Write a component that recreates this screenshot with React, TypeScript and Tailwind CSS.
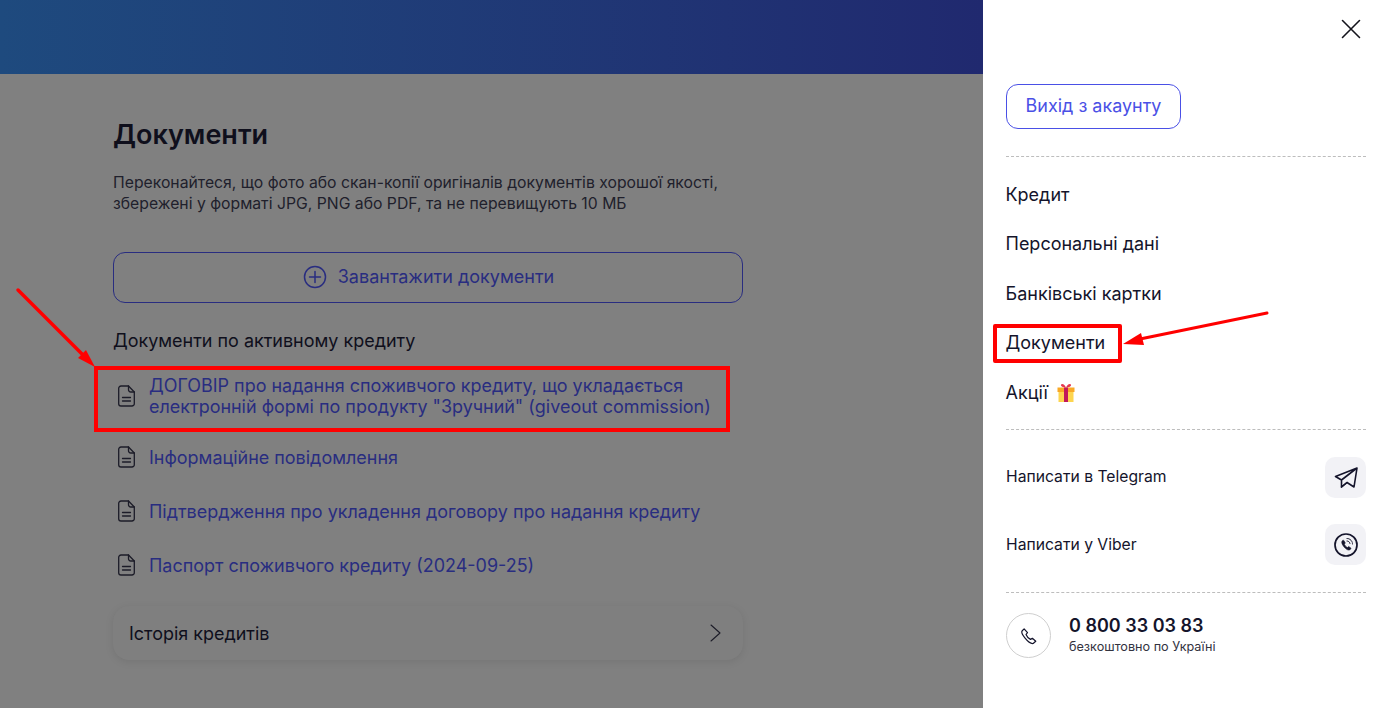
import React from "react";

const DocIcon = () => (
  <svg width="17" height="22" viewBox="0 0 17 22" fill="none" stroke="#1c1c28" strokeWidth="1.3" strokeLinejoin="round" strokeLinecap="round" className="shrink-0">
    <path d="M10.500 1H3a2.300 2.300 0 0 0-2.300 2.300v15.400A2.300 2.300 0 0 0 3 21h11a2.300 2.300 0 0 0 2.300-2.300V7z" />
    <path d="M10.500 1v3.500A2.300 2.300 0 0 0 12.800 7h3.500" />
    <path d="M4.500 12.500h8M4.500 16h8" />
  </svg>
);

const Doc = ({ children, className }: { children: React.ReactNode; className: string }) => (
  <a className={`flex items-center gap-[14px] pl-[5px] text-[17.97px] leading-[21px] text-[#292d80] ${className}`}>
    <DocIcon />
    <span>{children}</span>
  </a>
);

const Dash = () => <div className="border-t border-dashed border-[#bdbdbd]" />;

const MenuItem = ({ children }: { children: React.ReactNode }) => (
  <div className="-ml-[0.5px] flex h-[49.5px] items-center gap-[9px] text-[18px] text-[#14142b]">{children}</div>
);

const Contact = ({ label, labelClass, children }: { label: string; labelClass: string; children: React.ReactNode }) => (
  <div className="flex items-center justify-between">
    <span className={`text-[15.7px] text-[#14142b] ${labelClass}`}>{label}</span>
    <span className="flex h-[41px] w-[41px] items-center justify-center rounded-[10px] bg-[#f2f2f6]">{children}</span>
  </div>
);

export default function App() {
  return (
    <div className="relative flex h-[708px] w-[1386px] overflow-hidden bg-[#808080] font-['Inter',sans-serif]">
      <main className="w-[983px] shrink-0">
        <div className="h-[74px] bg-gradient-to-r from-[#1e4a7e] to-[#20296f]" />
        <div className="w-[630px] ml-[113px] pt-[43px]">
          <h1 className="text-[27px] font-semibold leading-[36px] text-[#0f0f1c]">Документи</h1>
          <p className="mt-[19px] text-[15.75px] leading-[21px] text-[#20202c]">
            Переконайтеся, що фото або скан-копії оригіналів документів хорошої якості,
            <br />
            збережені у форматі JPG, PNG або PDF, та не перевищують 10 МБ
          </p>
          <button className="mt-[38px] flex h-[51px] w-full items-center justify-center gap-[11px] rounded-[12px] border border-[#292d80] pb-[2px] pl-px text-[18px] text-[#292d80]">
            <svg width="24" height="24" viewBox="0 0 24 24" fill="none" stroke="#292d80" strokeWidth="1.5" strokeLinecap="round">
              <circle cx="12" cy="12" r="10.500" />
              <path d="M12 6.500v11M6.500 12h11" />
            </svg>
            Завантажити документи
          </button>
          <div className="mt-[25px] text-[17.97px] leading-[26px] text-[#0f0f1c]">Документи по активному кредиту</div>
          <div className="mt-[20.5px] flex flex-col">
            <Doc className="">
              ДОГОВІР про надання споживчого кредиту, що укладається
              <br />
              електронній формі по продукту "Зручний" (giveout commission)
            </Doc>
            <Doc className="mt-[29.5px]">Інформаційне повідомлення</Doc>
            <Doc className="mt-[32px]">Підтвердження про укладення договору про надання кредиту</Doc>
            <Doc className="mt-[32px]">Паспорт споживчого кредиту (2024-09-25)</Doc>
          </div>
          <div className="mt-[30px] flex h-[54px] items-center justify-between rounded-[16px] bg-[#7f7f7f] pl-[16px] pr-[21px] text-[17.97px] text-[#0f0f1c] shadow-[0_2px_8px_rgba(0,0,0,0.09)]">
            <span className="pt-[2px]">Історія кредитів</span>
            <svg width="13" height="18" viewBox="0 0 13 18" fill="none" stroke="#1c1c28" strokeWidth="1.1" strokeLinecap="round" strokeLinejoin="round">
              <path d="M2 1 11 9l-9 8" />
            </svg>
          </div>
        </div>
      </main>

      <aside className="flex-1 bg-white pl-[23px] pr-[20px]">
        <div className="flex justify-end pr-[5px] pt-[19px]">
          <svg width="20" height="20" viewBox="0 0 20 20" fill="none" stroke="#14141c" strokeWidth="1.6" strokeLinecap="round">
            <path d="M1.500 1.500l17 17M18.500 1.500l-17 17" />
          </svg>
        </div>
        <button className="mt-[45px] flex h-[45px] w-[175px] items-center justify-center rounded-[12px] border border-[#4a50e6] pb-px text-[17.95px] text-[#4a50e6]">
          Вихід з акаунту
        </button>
        <div className="mt-[27px]"><Dash /></div>
        <nav className="mt-[12.5px] mb-[12px] flex flex-col">
          <MenuItem>Кредит</MenuItem>
          <MenuItem>Персональні дані</MenuItem>
          <MenuItem>Банківські картки</MenuItem>
          <MenuItem>Документи</MenuItem>
          <MenuItem>
            Акції
            <svg width="18" height="19" viewBox="0 0 18 19">
              <rect x="0.500" y="4.500" width="17" height="4.500" fill="#f9a825" />
              <rect x="1.500" y="9" width="15" height="10" fill="#fdd54f" />
              <rect x="7" y="4.500" width="4" height="14.500" fill="#c2185b" />
              <path d="M9 4.500C6 4.500 3.500 3.500 4 1.500 5.500 0 8 2 9 4.500c1-2.500 3.500-4.500 5-3 .5 2-2 3-5 3z" fill="#e5394f" />
            </svg>
          </MenuItem>
        </nav>
        <Dash />
        <div className="mt-[27px] flex flex-col gap-[26px]">
          <Contact label="Написати в Telegram" labelClass="-mt-px">
            <svg width="24" height="24" viewBox="0 0 24 24" fill="none" stroke="#14142b" strokeWidth="1.6" strokeLinejoin="round" strokeLinecap="round">
              <path d="M23 2 1.500 10.500l6 3.500L23 2l-3 19-7-4.500-5.500 4.500V14" />
              <path d="M7.500 21 13 16.500" />
            </svg>
          </Contact>
          <Contact label="Написати у Viber" labelClass="mt-0">
            <svg width="24" height="24" viewBox="0 0 24 24" fill="none" stroke="#14142b" strokeWidth="1.700" strokeLinecap="round" strokeLinejoin="round">
              <circle cx="12" cy="12" r="11" />
              <path d="M8.500 7.500c-1.200 1-1 2.800.5 5s3.800 4.500 5.500 4.500c1.500 0 2.500-1 2.500-1.800l-2.300-1.700-1.200 1c-1.300-.6-2.600-2-3.200-3.300l1-1.200-1.500-2.500z" fill="#14142b" strokeWidth="0.600" />
              <path d="M13 5.500c3 0 5.500 2.500 5.500 5.500M13 8c1.500 0 3 1.400 3 3" strokeWidth="1" strokeDasharray="1.500 1" />
            </svg>
          </Contact>
        </div>
        <div className="mt-[27px]"><Dash /></div>
        <div className="mt-[20px] flex items-center gap-[18px]">
          <span className="flex h-[45px] w-[45px] items-center justify-center rounded-full border border-[#cfcfcf]">
            <svg width="18" height="18" viewBox="0 0 24 24" fill="none" stroke="#14142b" strokeWidth="1.600" strokeLinejoin="round">
              <path d="M5.500 2.500 3 5c-1 1-.5 4.500 3.500 9.500s8 8 11 7.500l3.500-3-4.500-4-2.500 1.500c-2-1-5-4-6-6.500l2-2.500z" />
            </svg>
          </span>
          <div className="-mt-px">
            <div className="text-[18px] font-semibold leading-[24px] text-[#14142b]">0 800 33 03 83</div>
            <div className="text-[12.65px] leading-[18px] text-[#33333f]">безкоштовно по Україні</div>
          </div>
        </div>
      </aside>

      <div className="absolute left-[94px] top-[366px] h-[66px] w-[636px] border-4 border-[#ff0000]" />
      <div className="absolute left-[993px] top-[324px] h-[39px] w-[129px] rounded-[2px] border-4 border-[#ff0000]" />
      <svg className="pointer-events-none absolute left-0 top-0" width="1386" height="708" viewBox="0 0 1386 708" fill="none">
        <path d="M18 290 86 358" stroke="#ff0000" strokeWidth="3.500" strokeLinecap="round" />
        <path d="M95 367 78 358 86 350z" fill="#ff0000" />
        <path d="M1267 313 1140 339" stroke="#ff0000" strokeWidth="3" strokeLinecap="round" />
        <path d="M1123 344 1141 333 1144 345z" fill="#ff0000" />
      </svg>
    </div>
  );
}
